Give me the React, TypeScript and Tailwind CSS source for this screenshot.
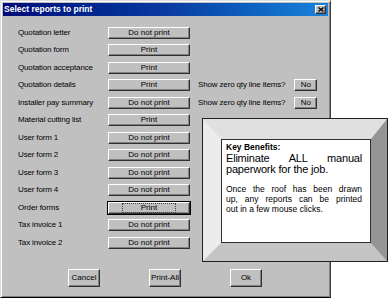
import React from "react";

type Row = {
  label: string;
  value: string;
  zero?: boolean;
  focus?: boolean;
};

const rows: Row[] = [
  { label: "Quotation letter", value: "Do not print" },
  { label: "Quotation form", value: "Print" },
  { label: "Quotation acceptance", value: "Print" },
  { label: "Quotation details", value: "Print", zero: true },
  { label: "Installer pay summary", value: "Do not print", zero: true },
  { label: "Material cutting list", value: "Print" },
  { label: "User form 1", value: "Do not print" },
  { label: "User form 2", value: "Do not print" },
  { label: "User form 3", value: "Do not print" },
  { label: "User form 4", value: "Do not print" },
  { label: "Order forms", value: "Print", focus: true },
  { label: "Tax invoice 1", value: "Do not print" },
  { label: "Tax invoice 2", value: "Do not print" },
];

const bevel =
  "bg-[#c0c0c0] border border-t-white border-l-white border-b-[#303030] border-r-[#303030] shadow-[inset_-1px_-1px_0_#808080]";

const SelectReports: React.FC = () => {
  return (
    <div className="relative w-[388px] h-[299px] bg-white overflow-hidden font-['Liberation_Sans',Arial,sans-serif] text-black">
      {/* dialog */}
      <div className="w-[331px] h-[298px] bg-[#c0c0c0] border border-t-[#dfdfdf] border-l-[#dfdfdf] border-b-[#000] border-r-[#404040] shadow-[inset_1px_1px_0_#fff,inset_-1px_-1px_0_#808080] p-[2px] flex flex-col">
        <div className="h-[13px] bg-gradient-to-r from-[#000a78] via-[#0a3aa0] to-[#1a84dc] flex items-center justify-between pl-[1px] pr-[2px]">
          <span className="text-white font-bold text-[8.5px] leading-none">
            Select reports to print
          </span>
          <div className={`${bevel} w-[11px] h-[9px] flex items-center justify-center`}>
            <svg width="6" height="5" viewBox="0 0 6 5">
              <path d="M0.5 0.5 L5.5 4.5 M5.5 0.5 L0.5 4.5" stroke="#000" strokeWidth="1.4" />
            </svg>
          </div>
        </div>

        <div className="flex flex-col pt-[8px]">
          {rows.map((r) => (
            <div key={r.label} className="h-[17.5px] flex items-center text-[8px]">
              <span className="w-[105px] pl-[15px] leading-none tracking-[-0.15px]">{r.label}</span>
              <div
                className={`${bevel} w-[82px] h-[12px] flex items-center justify-center leading-none ${
                  r.focus ? "outline outline-1 outline-black" : ""
                }`}
              >
                <span className={r.focus ? "outline outline-1 outline-dotted outline-[#404040] px-[18px]" : ""}>
                  {r.value}
                </span>
              </div>
              {r.zero && (
                <>
                  <span className="ml-[8px] leading-none tracking-[-0.15px]">Show zero qty line items?</span>
                  <div className={`${bevel} ml-[9px] w-[23px] h-[12px] flex items-center justify-center leading-none`}>
                    No
                  </div>
                </>
              )}
            </div>
          ))}
        </div>

        <div className="flex pl-[65px] gap-[49px] mt-[17px] text-[8px]">
          <div className={`${bevel} w-[32px] h-[18px] flex items-center justify-center`}>Cancel</div>
          <div className={`${bevel} w-[32px] h-[18px] flex items-center justify-center`}>Print-All</div>
          <div className={`${bevel} w-[32px] h-[18px] flex items-center justify-center`}>Ok</div>
        </div>
      </div>

      {/* key benefits callout */}
      <div className="absolute left-[202px] top-[118px] w-[186px] h-[144px] border border-[#202020]">
        <div className="w-full h-full border-solid border-t-[20px] border-l-[18px] border-r-[16px] border-b-[18px] border-t-[#e0e0e0] border-l-[#ececec] border-r-[#959595] border-b-[#c4c4c4]">
          <div className="w-full h-full bg-white border border-[#303030] pl-[4px] pr-[8px] pt-[2px]">
            <div className="font-bold text-[8.5px] leading-[11px]">Key Benefits:</div>
            <div className="text-[11px] leading-[11px] tracking-[-0.2px]">
              <div className="text-justify [text-align-last:justify]">Eliminate ALL manual</div>
              <div>paperwork for the job.</div>
            </div>
            <div className="mt-[9px] text-[8.5px] leading-[10px]">
              <div className="text-justify [text-align-last:justify]">Once the roof has been drawn</div>
              <div className="text-justify [text-align-last:justify]">up, any reports can be printed</div>
              <div>out in a few mouse clicks.</div>
            </div>
          </div>
        </div>
      </div>
    </div>
  );
};

export default function App() {
  return <SelectReports />;
}
